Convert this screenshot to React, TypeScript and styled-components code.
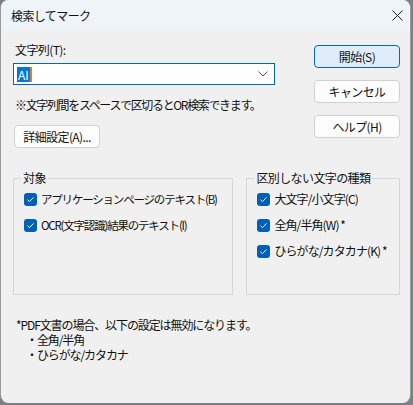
import styled, { createGlobalStyle } from "styled-components";

const GlobalStyle = createGlobalStyle`
  html, body {
    margin: 0;
    padding: 0;
    background: #7d7f83;
  }
  body {
    font-family: "Noto Sans CJK JP", "Noto Sans", sans-serif;
    font-size: 12px;
    color: #111;
  }
`;

const Window = styled.div`
  width: 409px;
  height: 403px;
  margin-left: 1px;
  background: #f0f0f0;
  border-radius: 8px;
  overflow: hidden;
  display: flex;
  flex-direction: column;
  box-shadow: 0 0 0 1px #9a9a9a;
`;

const TitleBar = styled.div`
  height: 30px;
  flex: none;
  background: #eff4f9;
  display: flex;
  align-items: center;
  justify-content: space-between;
  padding-left: 10px;
`;

const Title = styled.span`
  font-size: 12px;
  letter-spacing: -0.6px;
`;

const CloseButton = styled.div`
  width: 26px;
  height: 30px;
  display: flex;
  align-items: center;
  justify-content: center;
`;

const Body = styled.div`
  flex: 1;
  display: flex;
  flex-direction: column;
  padding: 12px 10px 0 12px;
  white-space: nowrap;
`;

const TopRow = styled.div`
  display: flex;
  justify-content: space-between;
`;

const LeftCol = styled.div`
  display: flex;
  flex-direction: column;
  width: 262px;
`;

const Label = styled.div`
  line-height: 16px;
  margin-left: 2px;
  letter-spacing: -0.6px;
`;

const Combo = styled.div`
  margin-top: 5px;
  height: 22px;
  box-sizing: border-box;
  border: 1px solid #0067c0;
  background: #fff;
  display: flex;
  align-items: center;
  justify-content: space-between;
  padding: 0 6px 0 3px;
`;

const Selected = styled.span`
  background: #0078d7;
  color: #fff;
  line-height: 15px;
  padding: 0 1px;
  border-right: 2px solid #e47a2a;
`;

const Note = styled.div`
  margin-top: 12px;
  margin-left: 2px;
  line-height: 16px;
  letter-spacing: -1.35px;
`;

const Button = styled.div<{ $primary?: boolean; $width?: number }>`
  width: ${(p) => p.$width ?? 86}px;
  height: 23px;
  box-sizing: border-box;
  display: flex;
  align-items: center;
  justify-content: center;
  border-radius: 4px;
  border: 1px solid ${(p) => (p.$primary ? "#0067c0" : "#d0d0d0")};
  background: ${(p) => (p.$primary ? "#e0ecf9" : "#fdfdfd")};
  letter-spacing: -0.6px;
`;

const DetailButton = styled(Button)`
  margin-top: 12px;
  margin-left: 1px;
`;

const RightCol = styled.div`
  display: flex;
  flex-direction: column;
  gap: 12px;
  margin-top: 3px;
`;

const GroupsRow = styled.div`
  margin-top: 23px;
  display: flex;
  gap: 13px;
`;

const Group = styled.fieldset<{ $width: number }>`
  margin: 0;
  width: ${(p) => p.$width}px;
  height: 124px;
  box-sizing: border-box;
  border: 1px solid #d7d7d7;
  padding: 6px 8px 0 10px;
  display: flex;
  flex-direction: column;
  gap: 10px;
  min-width: 0;
`;

const Legend = styled.legend`
  padding: 0 2px;
  margin-left: -3px;
  line-height: 14px;
  letter-spacing: -0.6px;
`;

const CheckRow = styled.div<{ $tight?: boolean }>`
  display: flex;
  align-items: center;
  gap: 4px;
  line-height: 16px;
  font-size: ${(p) => (p.$tight ? "11.5px" : "12px")};
  letter-spacing: ${(p) => (p.$tight ? "-1.2px" : "-0.9px")};
`;

const Box = styled.span`
  width: 13px;
  height: 13px;
  border-radius: 3px;
  background: #005fb8;
  display: flex;
  align-items: center;
  justify-content: center;
  flex: none;
`;

const Footer = styled.div`
  margin-top: 22px;
  margin-left: 3px;
  line-height: 15px;
  letter-spacing: -1.1px;
`;

const Indent = styled.div`
  padding-left: 10px;
`;

const Check = ({ children, tight }: { children: React.ReactNode; tight?: boolean }) => (
  <CheckRow $tight={tight}>
    <Box>
      <svg width="9" height="9" viewBox="0 0 9 9">
        <path d="M1.5 4.8 L3.5 6.6 L7.5 2.4" fill="none" stroke="#fff" strokeWidth="1" />
      </svg>
    </Box>
    <span>{children}</span>
  </CheckRow>
);

const App = () => (
  <>
    <GlobalStyle />
    <Window>
      <TitleBar>
        <Title>検索してマーク</Title>
        <CloseButton>
          <svg width="11" height="11" viewBox="0 0 11 11">
            <path d="M0.5 0.5 L10.5 10.5 M10.5 0.5 L0.5 10.5" stroke="#1b1b1b" strokeWidth="1" />
          </svg>
        </CloseButton>
      </TitleBar>
      <Body>
        <TopRow>
          <LeftCol>
            <Label>文字列(T):</Label>
            <Combo>
              <Selected>AI</Selected>
              <svg width="10" height="6" viewBox="0 0 10 6">
                <path d="M0.5 0.5 L5 5 L9.5 0.5" fill="none" stroke="#555" strokeWidth="1" />
              </svg>
            </Combo>
            <Note>※文字列間をスペースで区切るとOR検索できます。</Note>
            <DetailButton $width={86}>詳細設定(A)...</DetailButton>
          </LeftCol>
          <RightCol>
            <Button $primary>開始(S)</Button>
            <Button>キャンセル</Button>
            <Button>ヘルプ(H)</Button>
          </RightCol>
        </TopRow>
        <GroupsRow>
          <Group $width={221}>
            <Legend>対象</Legend>
            <Check tight>アプリケーションページのテキスト(B)</Check>
            <Check tight>OCR(文字認識)結果のテキスト(I)</Check>
          </Group>
          <Group $width={154}>
            <Legend>区別しない文字の種類</Legend>
            <Check>大文字/小文字(C)</Check>
            <Check>全角/半角(W) *</Check>
            <Check>ひらがな/カタカナ(K) *</Check>
          </Group>
        </GroupsRow>
        <Footer>
          <div>*PDF文書の場合、以下の設定は無効になります。</div>
          <Indent>・全角/半角</Indent>
          <Indent>・ひらがな/カタカナ</Indent>
        </Footer>
      </Body>
    </Window>
  </>
);

export default App;
